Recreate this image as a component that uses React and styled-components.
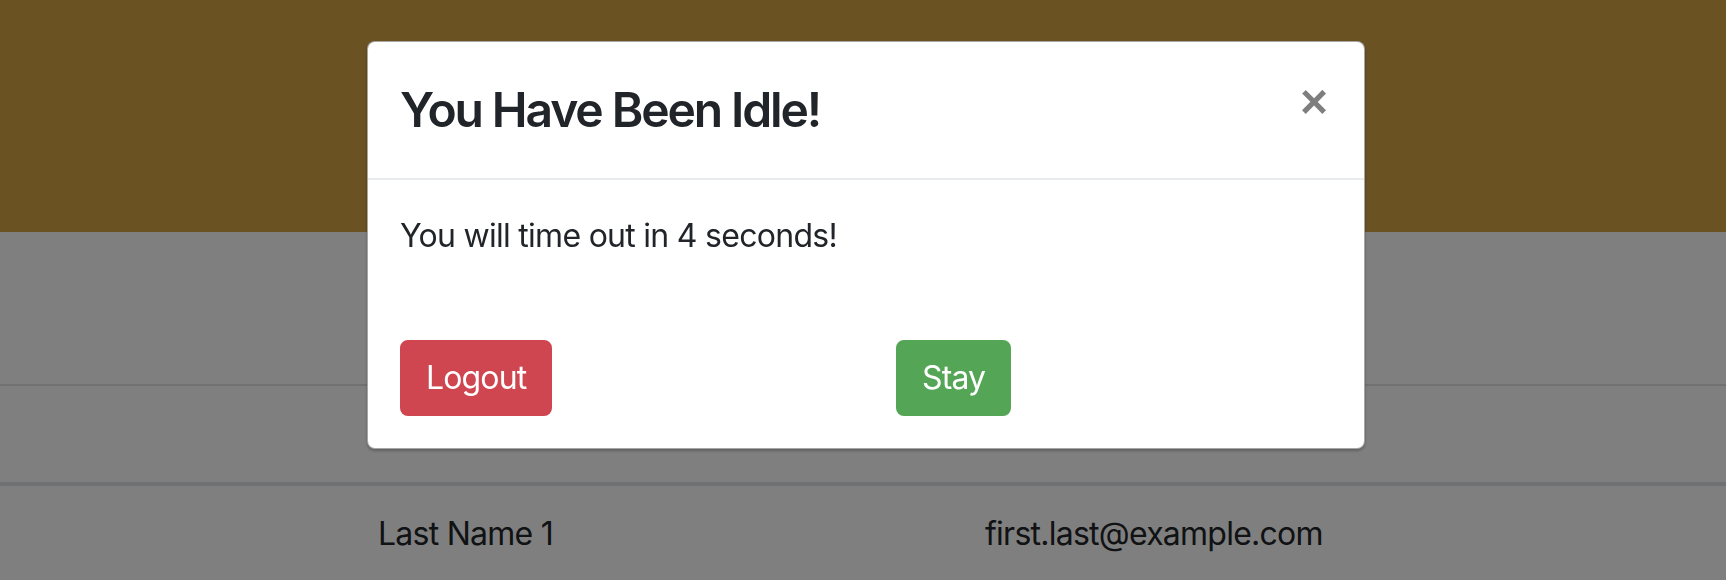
import React from "react";
import styled, { createGlobalStyle } from "styled-components";

const GlobalStyle = createGlobalStyle`
  html, body { margin: 0; padding: 0; }
  body {
    font-family: Inter, "Liberation Sans", Arial, sans-serif;
    color: #212529;
    background: #fff;
    overflow: hidden;
  }
  * { box-sizing: border-box; }
`;

const Page = styled.div`
  position: relative;
  width: 1726px;
  height: 580px;
  overflow: hidden;
  background: #fff;
`;

const Banner = styled.header`
  height: 232px;
  background: #d7a446;
`;

const Table = styled.div`
  margin-top: 152px;
  width: 100%;
`;

const Row = styled.div`
  display: grid;
  grid-template-columns: 354px 607px 1fr;
  border-top: ${(p) => (p.$head ? "2px solid #dee2e6" : "none")};
  border-bottom: ${(p) => (p.$head ? "4px solid #dee2e6" : "none")};
`;

const Cell = styled.div`
  padding: 24px;
  font-size: 32px;
  line-height: 48px;
  font-weight: ${(p) => (p.$head ? 700 : 400)};
  letter-spacing: -0.75px;
  white-space: nowrap;
`;

const Backdrop = styled.div`
  position: fixed;
  inset: 0;
  background: rgba(0, 0, 0, 0.5);
`;

const Dialog = styled.div`
  margin: 41px 0 0 367px;
  width: 998px;
  background: #fff;
  border: 1px solid rgba(0, 0, 0, 0.35);
  border-radius: 8px;
  box-shadow: 0 2px 3px rgba(0, 0, 0, 0.25);
  overflow: hidden;
`;

const Header = styled.div`
  display: flex;
  align-items: flex-start;
  padding: 32px;
  border-bottom: 2px solid #e9ecef;
`;

const Title = styled.h4`
  margin: 0;
  font-size: 48px;
  line-height: 72px;
  font-weight: 600;
  letter-spacing: -2.1px;
  color: #212529;
`;

const Close = styled.button`
  margin: 4px 4px 0 auto;
  padding: 0;
  border: 0;
  background: none;
  font-family: "Liberation Sans", Arial, sans-serif;
  font-size: 48px;
  font-weight: 700;
  line-height: 1;
  color: #000;
  opacity: 0.5;
  cursor: pointer;
`;

const Body = styled.div`
  padding: 32px;
`;

const Message = styled.p`
  margin: 0 0 80px;
  font-size: 32px;
  line-height: 48px;
  letter-spacing: -0.72px;
`;

const Actions = styled.div`
  display: grid;
  grid-template-columns: 1fr 1fr;
  column-gap: 60px;
`;

const Button = styled.button`
  justify-self: start;
  padding: 12px 24px;
  font-family: inherit;
  font-size: 32px;
  line-height: 48px;
  letter-spacing: -0.85px;
  color: #fff;
  background: ${(p) => p.$bg};
  border: 2px solid ${(p) => p.$bg};
  border-radius: 8px;
  cursor: pointer;
`;

export default function App() {
  return (
    <Page>
      <GlobalStyle />
      <Banner />
      <Table>
        <Row $head>
          <Cell $head />
          <Cell $head>Last Name</Cell>
          <Cell $head>Email</Cell>
        </Row>
        <Row>
          <Cell />
          <Cell>Last Name 1</Cell>
          <Cell>first.last@example.com</Cell>
        </Row>
      </Table>
      <Backdrop>
        <Dialog role="dialog">
          <Header>
            <Title>You Have Been Idle!</Title>
            <Close aria-label="Close">×</Close>
          </Header>
          <Body>
            <Message>You will time out in 4 seconds!</Message>
            <Actions>
              <Button $bg="#cf4550">Logout</Button>
              <Button $bg="#54a556">Stay</Button>
            </Actions>
          </Body>
        </Dialog>
      </Backdrop>
    </Page>
  );
}
